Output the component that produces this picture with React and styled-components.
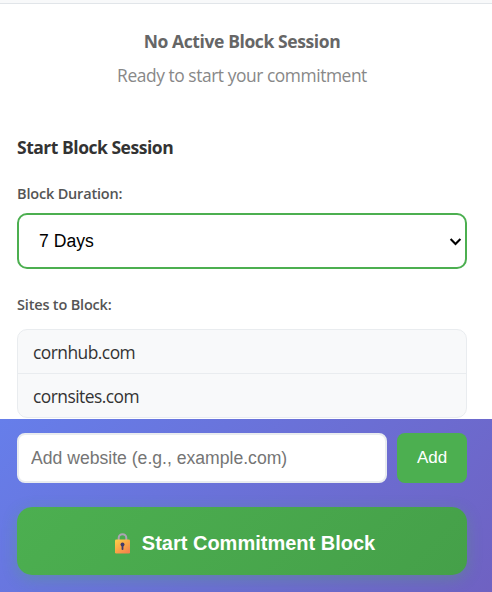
import React, { useState } from "react";
import styled, { createGlobalStyle } from "styled-components";

const GlobalStyle = createGlobalStyle`
    * {
        box-sizing: border-box;
    }
    body {
        margin: 0;
        overflow: hidden;
        font-family: 'Segoe UI', 'Open Sans', 'Noto Sans', sans-serif;
        color: #333;
    }
`;

const Popup = styled.div`
    height: 592px;
    display: flex;
    flex-direction: column;
    background: #fff;
`;

const HeaderEdge = styled.div`
    height: 4px;
    flex: none;
    background: #f8f9fa;
    border-bottom: 1px solid #e1e5e9;
`;

const Content = styled.div`
    height: 415px;
    flex: none;
    padding: 23px 25px 0 17px;
`;

const Status = styled.div`
    text-align: center;
    height: 103px;
`;

const StatusTitle = styled.div`
    font-size: 17.5px;
    line-height: 28px;
    font-weight: 700;
    letter-spacing: -0.4px;
    color: #666;
`;

const StatusText = styled.div`
    margin-top: 6px;
    font-size: 17.4px;
    line-height: 28px;
    letter-spacing: -0.44px;
    color: #888;
`;

const SectionTitle = styled.h3`
    margin: 3px 0 23px;
    font-size: 17.5px;
    line-height: 28px;
    font-weight: 700;
    letter-spacing: -0.48px;
    color: #333;
`;

const Label = styled.label`
    display: block;
    height: 29px;
    font-size: 14.5px;
    line-height: 20px;
    font-weight: 600;
    letter-spacing: -0.18px;
    color: #555;
`;

const SelectWrap = styled.div`
    display: grid;
    align-items: center;
    margin-bottom: 26px;
    & > * {
        grid-area: 1 / 1;
    }
    svg {
        justify-self: end;
        margin-right: 5px;
        pointer-events: none;
    }
`;

const DurationSelect = styled.select`
    appearance: none;
    width: 100%;
    height: 56px;
    padding: 0 20px;
    border: 2px solid #4caf50;
    border-radius: 10px;
    background: #fff;
    color: #000;
    font-family: Arial, 'Liberation Sans', sans-serif;
    font-size: 17.6px;
    outline: none;
`;

const SiteList = styled.div`
    margin-top: 5px;
    border: 1px solid #e9ecef;
    border-radius: 10px;
    background: #f8f9fa;
    overflow: hidden;
`;

const SiteRow = styled.div`
    height: 43px;
    padding: 0 15px;
    font-size: 17.4px;
    line-height: 45px;
    letter-spacing: -0.53px;
    color: #333;
    & + & {
        height: 44px;
        border-top: 1px solid #e9ecef;
    }
`;

const Actions = styled.div`
    flex: 1;
    padding: 14px 25px 0 17px;
    background: linear-gradient(135deg, #667eea 0%, #764ba2 100%) 0 0 / 100% 700px no-repeat;
    font-family: Arial, 'Liberation Sans', sans-serif;
`;

const AddRow = styled.div`
    display: flex;
    gap: 10px;
    margin-bottom: 24px;
`;

const SiteInput = styled.input`
    flex: 1;
    min-width: 0;
    height: 50px;
    padding: 0 12px;
    border: 2px solid #e9ecef;
    border-radius: 8px;
    background: #fff;
    font-family: inherit;
    font-size: 17.6px;
    outline: none;
    &::placeholder{
        color: #757575;
    }
`;

const AddButton = styled.button`
    width: 70px;
    height: 50px;
    padding: 0;
    border: none;
    border-radius: 8px;
    background: #4caf50;
    color: #fff;
    font-family: inherit;
    font-size: 17px;
`;

const StartButton = styled.button`
    display: flex;
    align-items: center;
    justify-content: center;
    gap: 11px;
    width: 100%;
    height: 68px;
    padding: 4px 0 0 5px;
    border: none;
    border-radius: 15px;
    background: linear-gradient(135deg, #4caf50, #45a049);
    box-shadow: 0 4px 15px rgba(76, 175, 80, 0.3);
    color: #fff;
    font-family: inherit;
    font-size: 20px;
    font-weight: 700;
`;

const ChevronIcon = () => (
    <svg width="13" height="9" viewBox="0 0 13 9" aria-hidden="true">
        <path d="M1.6 2l4.9 4.9L11.4 2" fill="none" stroke="#000" strokeWidth="2.1" />
    </svg>
);

const LockIcon = () => (
    <svg width="17" height="21" viewBox="0 0 17 21" aria-hidden="true">
        <defs>
            <linearGradient id="lockBody" x1="0" y1="0" x2="0.8" y2="1">
                <stop offset="0" stopColor="#fdd04a" />
                <stop offset="0.5" stopColor="#fbaa45" />
                <stop offset="1" stopColor="#f4824d" />
            </linearGradient>
        </defs>
        <path d="M4.7 8V5a3.8 3.8 0 0 1 7.6 0v3" fill="none" stroke="#aba4b4" strokeWidth="2" />
        <rect x="1" y="6.5" width="15" height="14" rx="1.3" fill="url(#lockBody)" />
        <circle cx="8.5" cy="11.5" r="2" fill="#433b6b" />
        <rect x="7.6" y="12" width="1.8" height="5" rx="0.8" fill="#433b6b" />
    </svg>
);

const App = () => {
    const [sites, setSites] = useState(["cornhub.com", "cornsites.com"]);
    const [newSite, setNewSite] = useState("");

    const addSite = () => {
        const site = newSite.trim();
        if (!site || sites.includes(site)) return;
        setSites([...sites, site]);
        setNewSite("");
    };

    return (
        <>
            <GlobalStyle />
            <Popup>
                <HeaderEdge />
                <Content>
                    <Status>
                        <StatusTitle>No Active Block Session</StatusTitle>
                        <StatusText>Ready to start your commitment</StatusText>
                    </Status>
                    <SectionTitle>Start Block Session</SectionTitle>
                    <Label htmlFor="duration">Block Duration:</Label>
                    <SelectWrap>
                        <DurationSelect id="duration" defaultValue="7">
                            <option value="7">7 Days</option>
                            <option value="30">30 Days</option>
                        </DurationSelect>
                        <ChevronIcon />
                    </SelectWrap>
                    <Label as="div">Sites to Block:</Label>
                    <SiteList>
                        {sites.map((site) => <SiteRow key={site}>{site}</SiteRow>)}
                    </SiteList>
                </Content>
                <Actions>
                    <AddRow>
                        <SiteInput
                            placeholder="Add website (e.g., example.com)"
                            value={newSite}
                            onChange={(e) => setNewSite(e.target.value)}
                        />
                        <AddButton onClick={addSite}>Add</AddButton>
                    </AddRow>
                    <StartButton>
                        <LockIcon />
                        <span>Start Commitment Block</span>
                    </StartButton>
                </Actions>
            </Popup>
        </>
    );
};

export default App;
